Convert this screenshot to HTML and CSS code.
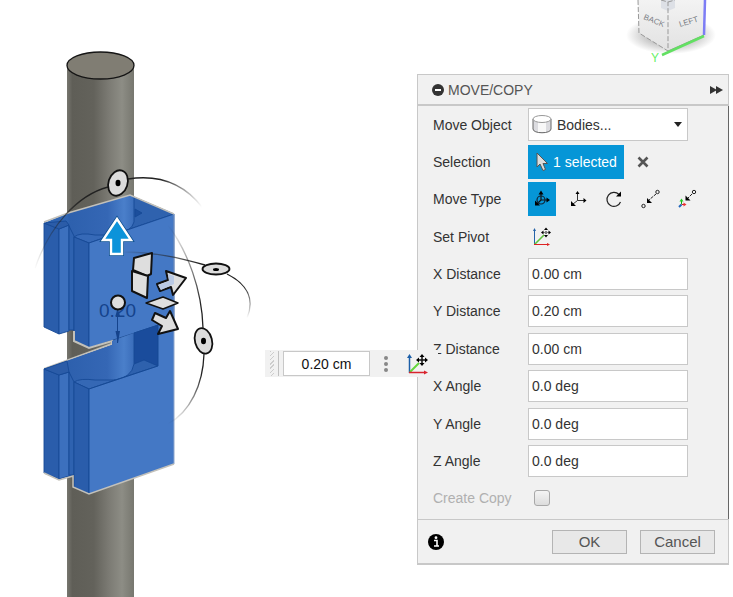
FILE: index.html
```
<!DOCTYPE html>
<html lang="en">
<head>
    <meta charset="UTF-8">
    <meta name="viewport" content="width=device-width, initial-scale=1.0">
    <title>Move/Copy</title>
    <link rel="stylesheet" href="styles.css">
</head>
<body>
    <main class="workspace">
        <svg class="scene" aria-label="Model view">
            <defs>
                <linearGradient id="rod">
                    <stop offset="0" stop-color="#77766f"/>
                    <stop offset="0.08" stop-color="#5f5e57"/>
                    <stop offset="0.4" stop-color="#63625b"/>
                    <stop offset="0.62" stop-color="#7b7a73"/>
                    <stop offset="0.82" stop-color="#8d8d85"/>
                    <stop offset="1" stop-color="#77776f"/>
                </linearGradient>
                <linearGradient id="bore">
                    <stop offset="0" stop-color="#2d60ad"/>
                    <stop offset="0.6" stop-color="#3567b5"/>
                    <stop offset="0.85" stop-color="#4a7fca"/>
                    <stop offset="1" stop-color="#3a6dba"/>
                </linearGradient>
                <linearGradient id="fadeX" gradientUnits="userSpaceOnUse" x1="34" y1="0" x2="202" y2="0">
                    <stop offset="0" stop-color="#222" stop-opacity="0"/>
                    <stop offset="0.3" stop-color="#222"/>
                    <stop offset="0.75" stop-color="#222"/>
                    <stop offset="1" stop-color="#222" stop-opacity="0"/>
                </linearGradient>
                <linearGradient id="fadeZ" gradientUnits="userSpaceOnUse" x1="122" y1="250" x2="200" y2="262">
                    <stop offset="0" stop-color="#222" stop-opacity="0"/>
                    <stop offset="1" stop-color="#222"/>
                </linearGradient>
                <linearGradient id="fadeZ2" gradientUnits="userSpaceOnUse" x1="0" y1="285" x2="0" y2="318">
                    <stop offset="0" stop-color="#222"/>
                    <stop offset="1" stop-color="#222" stop-opacity="0"/>
                </linearGradient>
                <linearGradient id="fadeY" gradientUnits="userSpaceOnUse" x1="0" y1="225" x2="0" y2="424">
                    <stop offset="0" stop-color="#222" stop-opacity="0"/>
                    <stop offset="0.4" stop-color="#222"/>
                    <stop offset="0.75" stop-color="#222"/>
                    <stop offset="1" stop-color="#222" stop-opacity="0"/>
                </linearGradient>
            </defs>

            <!-- rod -->
            <rect x="67" y="66" width="67" height="100%" fill="url(#rod)"/>
            <ellipse cx="100.5" cy="65.5" rx="33.5" ry="13.5" fill="#807d73" stroke="#151515" stroke-width="1.3"/>

            <!-- upper clamp -->
            <g stroke="#164a96" stroke-width="0.9" stroke-linejoin="round">
                <path d="M44 223 68 213 130 195 174 214 89 243 74 237 69 330 59 229Z" fill="#2f64b2" stroke="none"/>
                <path d="M68 213 130 195 134 197V222Q132 233 112 235L74 237 69 330V225Z" fill="url(#bore)" stroke="none"/>
                <path d="M134 197 174 214 112 235Q132 232 134 222Z" fill="#2f62ae"/>
                <path d="M135 209 142 213 135 217Z" fill="#1b4e9c"/>
                <path d="M44 223 59 229V334L44 327Z" fill="#2a5dab"/>
                <path d="M59 229 69 225V331L59 334Z" fill="#3c70be"/>
                <path d="M44 223 66 221 69 225 59 229Z" fill="#2b5ca8"/>
                <path d="M69 226 74 236V330H69Z" fill="#2e62b0"/>
                <path d="M74 237Q80 232 95 235L112 235 89 243Z" fill="#3669b7"/>
                <path d="M74 237 89 243V348L74 340Z" fill="#2a5dab"/>
                <path d="M89 243 174 214V320L89 348Z" fill="#4478c5"/>
            </g>
            <path d="M44 222 68 213 130 195 174 214" fill="none" stroke="#c3c1ba" stroke-width="1.5"/>
            <path d="M74 331V341L89 348 112 341V344L44 369" fill="none" stroke="#c3c1ba" stroke-width="2"/>

            <!-- lower clamp -->
            <g stroke="#164a96" stroke-width="0.9" stroke-linejoin="round">
                <path d="M44 369 112 345V341L158 325V367L89 389 74 382V475L59 479 44 473Z" fill="#2e62b0" stroke="none"/>
                <path d="M67 361 112 345V341L134 333V370Q131 378 115 380L80 381 74 382 69 372Z" fill="url(#bore)" stroke="none"/>
                <path d="M134 333 158 325V366L144 360 134 364Z" fill="#1a4c9c"/>
                <path d="M134 364 144 360 158 366 112 381Q132 378 134 364Z" fill="#2e61ad"/>
                <path d="M44 369 59 375V479L44 473Z" fill="#2a5dab"/>
                <path d="M59 375 69 372V476L59 479Z" fill="#3c70be"/>
                <path d="M44 369 67 361 69 372 59 375Z" fill="#2b5ca8"/>
                <path d="M69 372 74 382V475H69Z" fill="#2e62b0"/>
                <path d="M74 382Q80 378 95 380L115 380 89 389Z" fill="#3568b5"/>
                <path d="M74 382 89 389V494L74 487Z" fill="#2a5dab"/>
            </g>
            <path d="M89 389 158 366V325L174 319V464L89 494Z" fill="#4478c5"/>
            <path d="M89 494V389L158 366V325" fill="none" stroke="#164a96"/>
            <path d="M174 214V464" stroke="#8ea6cb"/>
            <path d="M44 473 59 480 73 476V487L89 494 174 464" fill="none" stroke="#c3c1ba" stroke-width="1.5"/>

            <!-- dimension -->
            <g fill="#15438c">
                <text class="dimension" x="99" y="317">0.20</text>
                <path d="M117.5 308V343" stroke="#15438c"/>
                <path d="M115.5 316 117.5 308 120 316ZM115.5 331H120L118 343Z"/>
            </g>

            <!-- rotation handles -->
            <g fill="none" stroke-width="1.3">
                <path d="M35 268C50 225 78 195 108 187M128 179C160 174 184 184 202 207" stroke="url(#fadeX)"/>
                <path d="M122 252C155 252 180 258 205 265" stroke="url(#fadeZ)"/>
                <path d="M227 274C247 284 255 299 247 318" stroke="url(#fadeZ2)"/>
                <path d="M168 225C188 252 202 290 203 328M204 354C203 385 190 412 168 424" stroke="url(#fadeY)"/>
            </g>
            <g fill="#dcdcdc" stroke="#111" stroke-width="1.8">
                <ellipse cx="118" cy="183" rx="9.5" ry="13" transform="rotate(18 118 183)"/>
                <ellipse cx="216" cy="269" rx="13.5" ry="5.5"/>
                <ellipse cx="203.5" cy="341" rx="8.5" ry="13" transform="rotate(-15 203 341)"/>
            </g>
            <ellipse cx="118" cy="183" rx="2.5" ry="3.2"/>
            <ellipse cx="216" cy="269.5" rx="3" ry="1.5"/>
            <ellipse cx="203.5" cy="341" rx="2.5" ry="3.2"/>

            <!-- translation handles -->
            <path d="M117 219 131 240H122V254H111V240H103Z" fill="#0c93da" stroke="#0b5090" stroke-width="4"/>
            <path d="M117 219 131 240H122V254H111V240H103Z" fill="#0c93da" stroke="#fff" stroke-width="2.4"/>
            <g fill="#dedede" stroke="#111" stroke-width="2" stroke-linejoin="round">
                <path d="M134 258 152 253 151 274 147 276 133 270Z"/>
                <path d="M132 271 148 276 147 298 132 291Z"/>
                <path d="M157 284 168 280 166 271 186 278 173 295 171 287 160 291Z"/>
                <path d="M155 313 166 318 170 311 178 329 158 334 162 326 152 320Z"/>
                <path d="M146 303 163 297 178 303 163 309Z" stroke-width="1.4"/>
                <circle cx="118" cy="302.5" r="7"/>
            </g>
            <path d="M158 285 169 281 168 274 174 276V284L161 290Z" fill="#b9c9e4"/>
        </svg>

        <svg class="view-cube" width="113" height="74" viewBox="0 0 113 74" aria-label="View cube">
            <defs>
                <radialGradient id="shade">
                    <stop offset="0.5" stop-color="#999" stop-opacity="0.6"/>
                    <stop offset="1" stop-color="#999" stop-opacity="0"/>
                </radialGradient>
                <linearGradient id="face" x1="0" y1="0" x2="0" y2="1">
                    <stop offset="0" stop-color="#f3f3f3"/>
                    <stop offset="1" stop-color="#e2e2e2"/>
                </linearGradient>
            </defs>
            <ellipse cx="51" cy="35" rx="45" ry="19" fill="url(#shade)"/>
            <path d="M18 0H48V51L19 33Z" fill="url(#face)"/>
            <path d="M48 0H85L84 35 48 51Z" fill="url(#face)"/>
            <path d="M41 0H55V8L48 11 41 8Z" fill="#dde0e6"/>
            <path d="M18 0 19 33 48 51V2M41 0 48 2 55 0" fill="none" stroke="#999" stroke-dasharray="5 2"/>
            <path d="M48 51 84 35" stroke="#999"/>
            <path d="M85 0 84 35" stroke="#7d7df5" stroke-width="2.5"/>
            <path d="M42 55 84 36" stroke="#62e062" stroke-width="2.5"/>
            <text class="cube-face" x="23" y="19" transform="rotate(22 23 19)">BACK</text>
            <text class="cube-face" x="60" y="27" transform="rotate(-17 60 27)">LEFT</text>
            <text class="cube-axis" x="31" y="62">Y</text>
        </svg>

        <section class="panel">
            <header class="panel-header">
                <svg width="12" height="12" viewBox="0 0 12 12"><circle cx="6" cy="6" r="6" fill="#333"/><path d="M3 6H9" stroke="#fff" stroke-width="2"/></svg>
                <h1>MOVE/COPY</h1>
                <svg class="expand" width="13" height="8" viewBox="0 0 13 8"><path d="M0 0 7 4 0 8ZM6 0 13 4 6 8Z" fill="#333"/></svg>
            </header>

            <form class="panel-body" id="move-form">
                <div class="row">
                    <label for="move-object">Move Object</label>
                    <div class="select-box">
                        <select id="move-object">
                            <option>Bodies...</option>
                        </select>
                        <svg class="select-icon" width="20" height="20" viewBox="0 0 20 20">
                            <path d="M1 5V15C1 20 19 20 19 15V5" fill="#dcdce0" stroke="#666"/>
                            <path d="M6 8H14V18H6Z" fill="#f8f8f8"/>
                            <ellipse cx="10" cy="5" rx="9" ry="3.5" fill="#fff" stroke="#999"/>
                        </svg>
                        <svg class="select-arrow" width="8" height="5" viewBox="0 0 8 5"><path d="M0 0H8L4 5Z" fill="#222"/></svg>
                    </div>
                </div>
                <div class="row">
                    <span class="name">Selection</span>
                    <button type="button" class="selected-count">
                        <svg width="14" height="20" viewBox="0 0 14 20"><path d="M2 1V15L5 12 8 18.5 10.5 17.5 8 11.5H12.5Z" fill="#ddd" stroke="#555"/></svg>
                        1 selected
                    </button>
                    <button type="button" class="clear" aria-label="Clear selection">
                        <svg width="12" height="12" viewBox="0 0 12 12"><path d="M1.5 1.5 10.5 10.5M10.5 1.5 1.5 10.5" stroke="#555" stroke-width="2.6"/></svg>
                    </button>
                </div>
                <div class="row">
                    <span class="name">Move Type</span>
                    <div class="move-types">
                        <button type="button" class="active" aria-label="Free move">
                            <svg width="24" height="24" viewBox="0 0 24 24"><path d="M11 6V13H18M11 13 7 17" fill="none" stroke="#111" stroke-width="1.2"/><circle cx="11" cy="13" r="4" fill="none" stroke="#123" stroke-width="1.2"/><path d="M8.5 7.5 11 3.5 13.5 7.5ZM16.5 10.5 20 13 16.5 15.5ZM5 13.5 10 18.5H5Z"/></svg>
                        </button>
                        <button type="button" aria-label="Translate">
                            <svg width="24" height="24" viewBox="0 0 24 24"><path d="M11.5 6V13.5H18M11.5 13.5 7 17" fill="none" stroke="#333"/><path d="M9.5 7 11.5 4 13.5 7ZM17.5 11 20.5 13.5 17.5 16ZM5 14 10 19H5Z"/></svg>
                        </button>
                        <button type="button" aria-label="Rotate">
                            <svg width="24" height="24" viewBox="0 0 24 24"><path d="M17 7.5A7 7 0 1 0 18.5 15" fill="none" stroke="#222" stroke-width="1.2"/><path d="M19 4.5V9.5H14Z"/></svg>
                        </button>
                        <button type="button" aria-label="Point to point">
                            <svg width="24" height="24" viewBox="0 0 24 24"><circle cx="5.5" cy="19" r="1.7" fill="none" stroke="#222"/><circle cx="19.5" cy="5" r="1.7" fill="none" stroke="#222"/><path d="M18 7 11 13" stroke="#222" stroke-dasharray="3 1"/><path d="M9 11V16H14Z"/></svg>
                        </button>
                        <button type="button" aria-label="Point to position">
                            <svg width="24" height="24" viewBox="0 0 24 24"><circle cx="20" cy="5" r="1.7" fill="none" stroke="#222"/><path d="M18 7 14 11" stroke="#222" stroke-dasharray="3 1"/><path d="M11.5 8.5V13.5H16.5Z"/><path d="M7.5 17V13" stroke="#1a1"/><path d="M5.5 14.5 7.5 11.5 9.5 14.5Z" fill="#2c2"/><path d="M7.5 17.5H10" stroke="#c22"/><path d="M9.5 15.5 12.5 17.5 9.5 19.5Z" fill="#e33"/><path d="M7.5 17.5 5 20" stroke="#26b" stroke-width="2"/></svg>
                        </button>
                    </div>
                </div>
                <div class="row">
                    <span class="name">Set Pivot</span>
                    <button type="button" class="pivot" aria-label="Set Pivot">
                        <svg width="24" height="24" viewBox="0 0 24 24">
                            <path d="M4.5 20V5" stroke="#2563a8"/><path d="M3 6 4.5 3 6 6Z" fill="#2563a8"/>
                            <path d="M4.5 19.5 14 10" stroke="#5fc43c" stroke-width="1.6"/>
                            <path d="M4 19.5H18" stroke="#d22"/><path d="M17 18 20 19.5 17 21Z" fill="#d22"/>
                            <path d="M16 4V11M12.5 7.5H19.5" stroke="#111" stroke-dasharray="1 1"/>
                            <path d="M14 5 16 2.5 18 5ZM14 10 16 12.5 18 10ZM13.5 5.5 11 7.5 13.500 9.5ZM18.5 5.5 21 7.5 18.5 9.5Z"/>
                        </svg>
                    </button>
                </div>
                <div class="row">
                    <label for="x-distance">X Distance</label>
                    <input type="text" id="x-distance" value="0.00 cm">
                </div>
                <div class="row">
                    <label for="y-distance">Y Distance</label>
                    <input type="text" id="y-distance" value="0.20 cm">
                </div>
                <div class="row">
                    <label for="z-distance">Z Distance</label>
                    <input type="text" id="z-distance" value="0.00 cm">
                </div>
                <div class="row">
                    <label for="x-angle">X Angle</label>
                    <input type="text" id="x-angle" value="0.0 deg">
                </div>
                <div class="row">
                    <label for="y-angle">Y Angle</label>
                    <input type="text" id="y-angle" value="0.0 deg">
                </div>
                <div class="row">
                    <label for="z-angle">Z Angle</label>
                    <input type="text" id="z-angle" value="0.0 deg">
                </div>
                <div class="row disabled">
                    <label for="create-copy">Create Copy</label>
                    <input type="checkbox" id="create-copy" disabled>
                </div>
            </form>

            <footer class="panel-footer">
                <svg class="info" width="16" height="16" viewBox="0 0 16 16"><circle cx="8" cy="8" r="8"/><path d="M6 6.5H9V11.5M6 12H11" fill="none" stroke="#fff" stroke-width="1.6"/><circle cx="8" cy="3.7" r="1.4" fill="#fff"/></svg>
                <button type="submit" form="move-form">OK</button>
                <button type="button">Cancel</button>
            </footer>
        </section>

        <!-- floating value box next to the manipulator -->
        <div class="value-bar">
            <span class="grip"></span>
            <input type="text" value="0.20 cm" aria-label="Y Distance">
            <button type="button" aria-label="More">
                <svg width="6" height="18" viewBox="0 0 6 18" fill="#888"><circle cx="3" cy="3" r="2"/><circle cx="3" cy="9" r="2"/><circle cx="3" cy="15" r="2"/></svg>
            </button>
            <button type="button" aria-label="Set Pivot">
                <svg width="24" height="24" viewBox="0 0 24 24">
                    <path d="M3.5 21V5" stroke="#1c5fa8" stroke-width="1.5"/><path d="M1 6 3.5 2 6 6Z" fill="#1c5fa8"/>
                    <path d="M4 20 13 11" stroke="#63d63c" stroke-width="2"/>
                    <path d="M3 20.5H19" stroke="#d9232e" stroke-width="1.5"/><path d="M18 18.5 22 20.5 18 22.5Z" fill="#d9232e"/>
                    <path d="M16 4V12M12 8H20" stroke="#111" stroke-width="1.5"/>
                    <path d="M13.5 5 16 2 18.5 5ZM13.5 11 16 14 18.5 11ZM13 5.5 10 8 13 10.5ZM19 5.5 22 8 19 10.5Z"/>
                </svg>
            </button>
        </div>
    </main>
</body>
</html>
```
FILE: styles.css
```
* {
    box-sizing: border-box;
}
body {
    margin: 0;
    background-color: #fff;
    font-family: "Liberation Sans", Arial, sans-serif;
    font-size: 14px;
    color: #333;
}
button, input, select {
    font: inherit;
    color: inherit;
    margin: 0;
}
button {
    display: flex;
    align-items: center;
    justify-content: center;
    padding: 0;
    border: none;
    background: none;
    cursor: pointer;
}
svg {
    display: block;
    flex: none;
}
.workspace {
    position: relative;
    min-height: 100vh;
    padding: 74px 4px 32px 0;
    overflow: hidden;
}
.scene {
    position: absolute;
    top: 0;
    left: 0;
    width: 100%;
    height: 100%;
}
.dimension {
    font-size: 19px;
}
.view-cube {
    position: absolute;
    top: 0;
    right: 0;
}
.cube-face {
    font-size: 8px;
    fill: #7b7f86;
}
.cube-axis {
    font-size: 12px;
    fill: #66f066;
}

/* dialog */
.panel {
    position: relative;
    width: 312px;
    margin-left: auto;
    background-color: #f1f1f1;
    border: 1px solid #c8c8c8;
    border-bottom-width: 2px;
}
.panel-header {
    display: flex;
    align-items: center;
    gap: 4px;
    height: 31px;
    padding: 0 5px 0 14px;
    border-bottom: 2px solid #c8c8c8;
}
.panel-header h1 {
    margin: 0;
    font-size: 14px;
    font-weight: normal;
    color: #555;
}
.expand {
    margin-left: auto;
}
.panel-body {
    display: grid;
    grid-auto-rows: 1fr;
    min-height: 413px;
    margin-right: -1px;
    padding: 0 0 2px 15px;
    border-right: 1px solid #666;
}
.row {
    display: flex;
    align-items: center;
}
.row label, .row .name {
    width: 95px;
}
.row input[type="text"], .select-box {
    width: 160px;
}
.row input[type="text"] {
    height: 32px;
    padding: 0 3px;
    border: 1px solid #c8c8c8;
    background-color: #fff;
}
.select-box {
    position: relative;
}
.select-box select {
    display: block;
    appearance: none;
    width: 100%;
    height: 33px;
    padding: 0 20px 0 28px;
    border: 1px solid #c8c8c8;
    border-radius: 0;
    background-color: #fff;
}
.select-icon, .select-arrow {
    position: absolute;
    pointer-events: none;
}
.select-icon {
    top: 6px;
    left: 4px;
}
.select-arrow {
    top: 14px;
    right: 6px;
}
.selected-count {
    gap: 4px;
    width: 96px;
    height: 34px;
    background-color: #0696d7;
    color: #fff;
}
.clear {
    width: 38px;
    height: 34px;
}
.move-types {
    display: flex;
    gap: 8px;
}
.move-types button, .pivot {
    width: 28px;
    height: 34px;
}
.move-types .active {
    background-color: #0696d7;
}
.disabled {
    color: #b0b0b0;
}
.row input[type="checkbox"] {
    appearance: none;
    width: 16px;
    height: 16px;
    margin-left: 6px;
    border: 1px solid #a8a8a8;
    border-radius: 3px;
    background: linear-gradient(#f4f4f4, #dcdcdc);
}
.panel-footer {
    display: flex;
    align-items: center;
    gap: 13px;
    height: 44px;
    padding: 0 13px 0 10px;
    border-top: 1px solid #c8c8c8;
}
.info {
    margin-right: auto;
}
.panel-footer button {
    width: 75px;
    height: 24px;
    border: 1px solid #b4b4b4;
    background-color: #e8e8e8;
    font-size: 15px;
    color: #555;
}

/* value bar floats over the model and the dialog edge */
.value-bar {
    position: absolute;
    top: 350px;
    left: 265px;
    display: flex;
    align-items: center;
    width: 173px;
    height: 27px;
    background-color: #f1f1f1;
}
.grip {
    width: 14px;
    height: 25px;
    margin-right: 4px;
    border-right: 1px solid #c0c0c0;
    background: repeating-linear-gradient(135deg, #ccc 0 1px, #f1f1f1 1px 3px) 5px 0 / 4px 100% no-repeat;
}
.value-bar input {
    width: 87px;
    height: 25px;
    padding: 0;
    border: 1px solid #c8c8c8;
    background-color: #fff;
    color: #111;
    text-align: center;
}
.value-bar button {
    width: 32px;
    height: 27px;
}
```
